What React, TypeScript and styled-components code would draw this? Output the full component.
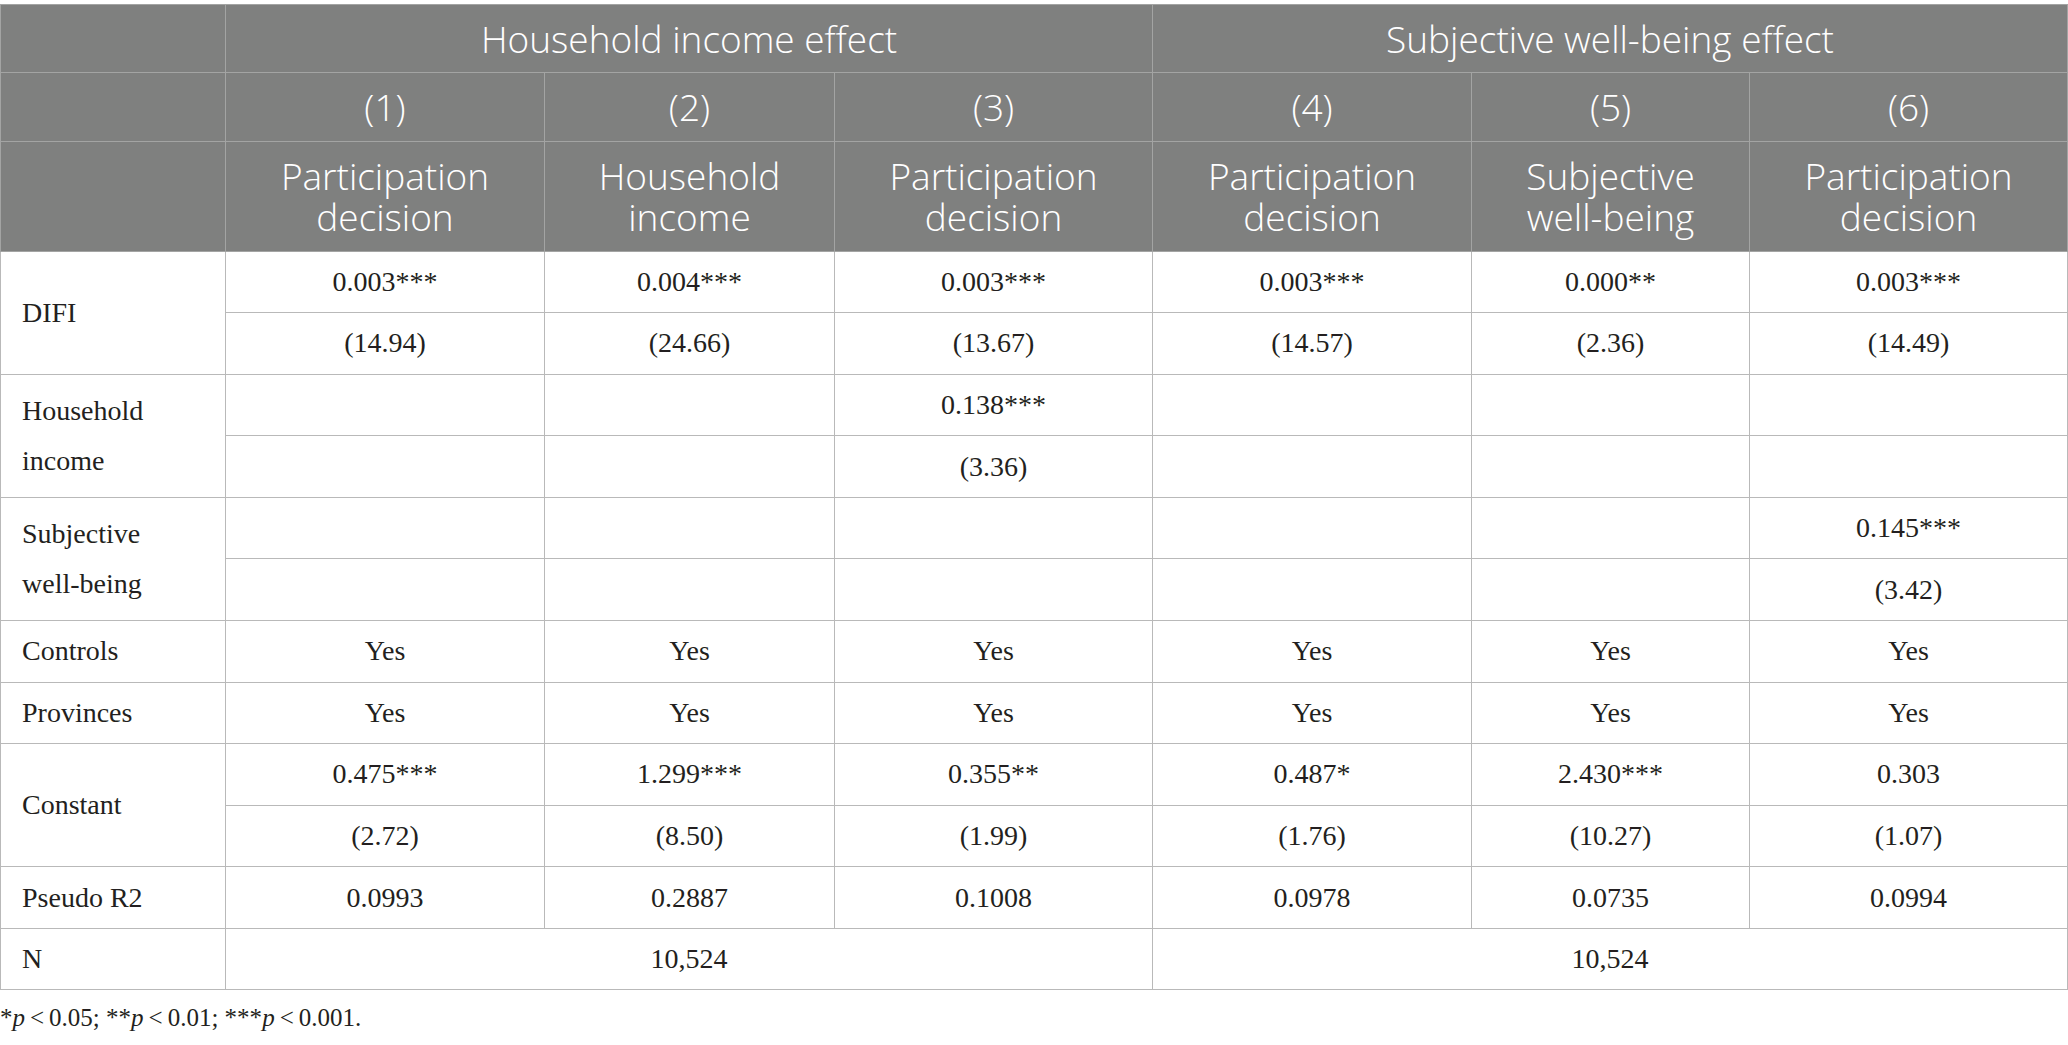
import React from 'react';
import styled, { createGlobalStyle } from 'styled-components';

const GlobalStyle = createGlobalStyle`
  html, body {
    margin: 0;
    padding: 0;
    background: #ffffff;
  }
`;

const Page = styled.div`
  padding-top: 4px;
  width: 2068px;
`;

const Table = styled.table`
  width: 2068px;
  border-collapse: collapse;
  table-layout: fixed;
  font-family: 'Liberation Serif', 'Times New Roman', serif;
  color: #231f20;
`;

const HeadRow = styled.tr<{ $h: number }>`
  height: ${props => props.$h}px;
  background: #7f807f;
`;

const HeadCell = styled.th`
  border: 1px solid #a3a4a3;
  padding: 0 10px;
  font-family: 'Open Sans', 'Liberation Sans', sans-serif;
  font-weight: 300;
  font-size: 37px;
  line-height: 41px;
  color: #ffffff;
  text-align: center;
  vertical-align: middle;
`;

const HeadLine = styled.span`
  display: block;
  height: 41px;
  white-space: nowrap;
`;

const BodyRow = styled.tr`
  height: 61.58px;
`;

const Cell = styled.td<{ $label?: boolean }>`
  border: 1px solid #b9b9b9;
  padding: ${props => (props.$label ? '0 21px' : '0 8px')};
  font-size: 28px;
  line-height: ${props => (props.$label ? '50px' : '30px')};
  text-align: ${props => (props.$label ? 'left' : 'center')};
  vertical-align: middle;
  white-space: ${props => (props.$label ? 'normal' : 'nowrap')};
`;

const Word = styled.span`
  white-space: nowrap;
`;

const Footnote = styled.p`
  margin: 13px 0 0;
  font-family: 'Liberation Serif', 'Times New Roman', serif;
  font-size: 25px;
  line-height: 30px;
  color: #231f20;
  & i {
    font-style: italic;
  }
`;

const widths = [225, 319, 290, 318, 319, 278, 318];

// keeps "well-being" on one line, as the source table does
const wrapWords = (text: string) =>
  text.split(' ').map((w, i) => (
    <React.Fragment key={i}>
      {i > 0 && ' '}
      <Word>{w}</Word>
    </React.Fragment>
  ));

const columns = [
  ['Participation', 'decision'],
  ['Household', 'income'],
  ['Participation', 'decision'],
  ['Participation', 'decision'],
  ['Subjective', 'well-being'],
  ['Participation', 'decision'],
];

type Block = { label: string; lines: string[][] };

const blocks: Block[] = [
  {
    label: 'DIFI',
    lines: [
      ['0.003***', '0.004***', '0.003***', '0.003***', '0.000**', '0.003***'],
      ['(14.94)', '(24.66)', '(13.67)', '(14.57)', '(2.36)', '(14.49)'],
    ],
  },
  {
    label: 'Household income',
    lines: [
      ['', '', '0.138***', '', '', ''],
      ['', '', '(3.36)', '', '', ''],
    ],
  },
  {
    label: 'Subjective well-being',
    lines: [
      ['', '', '', '', '', '0.145***'],
      ['', '', '', '', '', '(3.42)'],
    ],
  },
  { label: 'Controls', lines: [['Yes', 'Yes', 'Yes', 'Yes', 'Yes', 'Yes']] },
  { label: 'Provinces', lines: [['Yes', 'Yes', 'Yes', 'Yes', 'Yes', 'Yes']] },
  {
    label: 'Constant',
    lines: [
      ['0.475***', '1.299***', '0.355**', '0.487*', '2.430***', '0.303'],
      ['(2.72)', '(8.50)', '(1.99)', '(1.76)', '(10.27)', '(1.07)'],
    ],
  },
  {
    label: 'Pseudo R2',
    lines: [['0.0993', '0.2887', '0.1008', '0.0978', '0.0735', '0.0994']],
  },
];

const P = () => <i>p</i>;

export default function App() {
  return (
    <Page>
      <GlobalStyle />
      <Table>
        <colgroup>
          {widths.map((w, i) => (
            <col key={i} style={{ width: w }} />
          ))}
        </colgroup>
        <thead>
          <HeadRow $h={68}>
            <HeadCell />
            <HeadCell colSpan={3}>Household income effect</HeadCell>
            <HeadCell colSpan={3}>Subjective well-being effect</HeadCell>
          </HeadRow>
          <HeadRow $h={68.5}>
            <HeadCell />
            {[1, 2, 3, 4, 5, 6].map(n => (
              <HeadCell key={n}>({n})</HeadCell>
            ))}
          </HeadRow>
          <HeadRow $h={110}>
            <HeadCell />
            {columns.map((c, i) => (
              <HeadCell key={i}>
                {c.map(l => (
                  <HeadLine key={l}>{l}</HeadLine>
                ))}
              </HeadCell>
            ))}
          </HeadRow>
        </thead>
        <tbody>
          {blocks.map(b =>
            b.lines.map((line, li) => (
              <BodyRow key={b.label + li}>
                {li === 0 && (
                  <Cell $label rowSpan={b.lines.length}>
                    {wrapWords(b.label)}
                  </Cell>
                )}
                {line.map((v, i) => (
                  <Cell key={i}>{v}</Cell>
                ))}
              </BodyRow>
            ))
          )}
          <BodyRow>
            <Cell $label>N</Cell>
            <Cell colSpan={3}>10,524</Cell>
            <Cell colSpan={3}>10,524</Cell>
          </BodyRow>
        </tbody>
      </Table>
      <Footnote>
        *<P />{'\u2009<\u2009'}0.05; **<P />{'\u2009<\u2009'}0.01; ***<P />
        {'\u2009<\u2009'}0.001.
      </Footnote>
    </Page>
  );
}
